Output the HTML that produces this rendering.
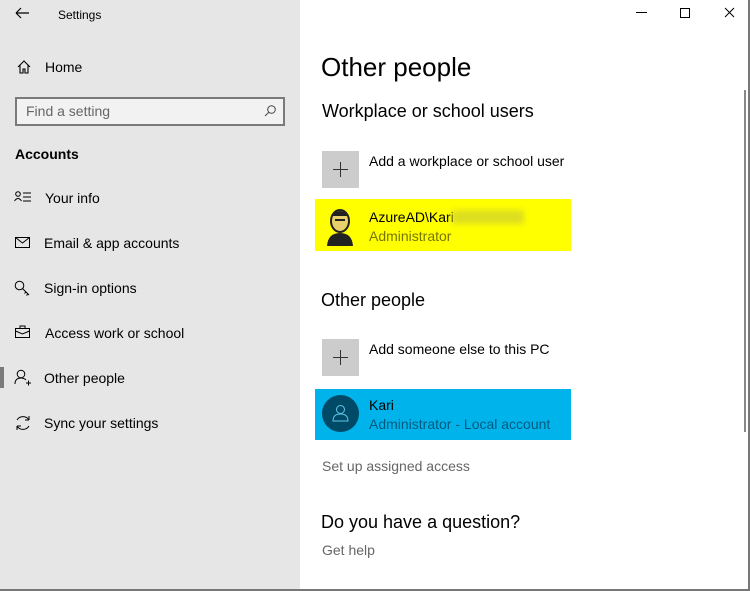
<!DOCTYPE html>
<html><head><meta charset="utf-8"><style>
*{margin:0;padding:0;box-sizing:border-box}
body{width:750px;height:591px;position:relative;overflow:hidden;background:#fff;font-family:"Liberation Sans",sans-serif;color:#000}
.a{position:absolute;white-space:nowrap}
#side{position:absolute;left:0;top:0;width:300px;height:591px;background:#e6e6e6}
.nav{font-size:14px}
.ic{position:absolute}
.g{color:#666}
</style></head><body>
<div id="side"></div>
<svg class="ic" style="left:14px;top:6px" width="16" height="14"><path d="M2 7H15M2 7L7 2M2 7L7 12" stroke="#000" stroke-width="1.2" fill="none"/></svg>
<div class="a" style="left:58px;top:8px;font-size:12px">Settings</div>
<svg class="ic" style="left:16px;top:59px" width="16" height="16"><path d="M2 8L8 2L14 8M4 6V14H7V10H9V14H12V6" stroke="#000" stroke-width="1.1" fill="none"/></svg>
<div class="a nav" style="left:45px;top:59px">Home</div>
<div class="a" style="left:15px;top:97px;width:270px;height:29px;border:2px solid #7a7a7a;background:#f2f2f2"></div>
<div class="a" style="left:26px;top:103px;font-size:14px;color:#666">Find a setting</div>
<svg class="ic" style="left:263px;top:104px" width="14" height="14"><circle cx="8.5" cy="5.5" r="3.8" stroke="#444" fill="none"/><path d="M6 8L2 12" stroke="#444"/></svg>
<div class="a" style="left:15px;top:146px;font-size:14px;font-weight:bold">Accounts</div>
<svg class="ic" style="left:14px;top:191px" width="18" height="12"><circle cx="4" cy="3" r="2.3" stroke="#000" fill="none"/><path d="M0.5 10Q4 5 7.5 10M9 2H17M9 6H17M9 10H17" stroke="#000" fill="none"/></svg>
<div class="a nav" style="left:45px;top:190px">Your info</div>
<svg class="ic" style="left:15px;top:237px" width="16" height="12"><rect x="0.5" y="0.5" width="14" height="10" stroke="#000" fill="none"/><path d="M0.5 0.5L7.5 6L14.5 0.5" stroke="#000" fill="none"/></svg>
<div class="a nav" style="left:44px;top:235px">Email &amp; app accounts</div>
<svg class="ic" style="left:14px;top:280px" width="18" height="18"><circle cx="5.5" cy="5.5" r="4.3" stroke="#000" fill="none"/><path d="M8.5 8.5L15 15M12 12L10.5 13.5M14 14L12.5 15.5" stroke="#000" fill="none"/></svg>
<div class="a nav" style="left:44px;top:280px">Sign-in options</div>
<svg class="ic" style="left:15px;top:325px" width="16" height="14"><rect x="0.5" y="3.5" width="14" height="9" stroke="#000" fill="none"/><path d="M5 3.5V1H10V3.5M0.5 6L7.5 9L14.5 6" stroke="#000" fill="none"/></svg>
<div class="a nav" style="left:45px;top:325px">Access work or school</div>
<div class="a" style="left:0;top:367px;width:4px;height:21px;background:#7a7a7a"></div>
<svg class="ic" style="left:14px;top:369px" width="18" height="18"><circle cx="7" cy="5" r="3.8" stroke="#000" fill="none"/><path d="M1 15Q1 9 7 9Q10 9 12 11M12 14H17M14.5 11.5V16.5" stroke="#000" fill="none"/></svg>
<div class="a nav" style="left:44px;top:370px">Other people</div>
<svg class="ic" style="left:14px;top:414px" width="18" height="18"><path d="M3 6A7 7 0 0 1 15 6M15 6V2M15 6H11M15 12A7 7 0 0 1 3 12M3 12V16M3 12H7" stroke="#000" fill="none"/></svg>
<div class="a nav" style="left:44px;top:415px">Sync your settings</div>

<svg class="ic" style="left:634px;top:6px" width="110" height="14"><path d="M2 6.5H13" stroke="#000"/><rect x="46.5" y="2.5" width="9" height="9" stroke="#000" fill="none"/><path d="M91 2L100 11M100 2L91 11" stroke="#000"/></svg>
<div class="a" style="left:321px;top:52px;font-size:26px">Other people</div>
<div class="a" style="left:322px;top:101px;font-size:18px">Workplace or school users</div>
<div class="a" style="left:322px;top:151px;width:37px;height:37px;background:#ccc"></div>
<svg class="ic" style="left:322px;top:151px" width="37" height="37"><path d="M18.5 11V26M11 18.5H26" stroke="#333"/></svg>
<div class="a" style="left:369px;top:153px;font-size:14px">Add a workplace or school user</div>
<div class="a" style="left:315px;top:199px;width:256px;height:52px;background:#ffff00"></div>
<svg class="ic" style="left:322px;top:206px" width="36" height="40"><ellipse cx="18" cy="15" rx="9" ry="11" fill="#e8d06a" stroke="#222" stroke-width="2"/><path d="M9 10Q18 0 27 10" fill="#222"/><path d="M5 40Q6 27 18 27Q30 27 31 40Z" fill="#222"/><rect x="13" y="13" width="10" height="2" fill="#222"/></svg>
<div class="a" style="left:369px;top:209px;font-size:14px">AzureAD\Kari</div>
<div class="a" style="left:452px;top:210px;width:72px;height:14px;background:#dede20;filter:blur(3px)"></div>
<div class="a" style="left:369px;top:228px;font-size:14px;color:#777700">Administrator</div>
<div class="a" style="left:321px;top:290px;font-size:18px">Other people</div>
<div class="a" style="left:322px;top:339px;width:37px;height:37px;background:#ccc"></div>
<svg class="ic" style="left:322px;top:339px" width="37" height="37"><path d="M18.5 11V26M11 18.5H26" stroke="#333"/></svg>
<div class="a" style="left:369px;top:341px;font-size:14px">Add someone else to this PC</div>
<div class="a" style="left:315px;top:389px;width:256px;height:51px;background:#00b4eb"></div>
<div class="a" style="left:322px;top:395px;width:37px;height:37px;border-radius:50%;background:#004a68"></div>
<svg class="ic" style="left:322px;top:395px" width="37" height="37"><circle cx="18.5" cy="14.5" r="4" stroke="#5fc6e8" fill="none"/><path d="M11 26Q11 19 18.5 19Q26 19 26 26Z" stroke="#5fc6e8" fill="none"/></svg>
<div class="a" style="left:369px;top:397px;font-size:14px">Kari</div>
<div class="a" style="left:369px;top:416px;font-size:14px;color:#005a80">Administrator - Local account</div>
<div class="a g" style="left:322px;top:458px;font-size:14px">Set up assigned access</div>
<div class="a" style="left:321px;top:512px;font-size:18px">Do you have a question?</div>
<div class="a g" style="left:322px;top:542px;font-size:14px">Get help</div>
<div class="a" style="left:744px;top:90px;width:2px;height:342px;background:#888"></div>
<div class="a" style="left:748px;top:0;width:2px;height:591px;background:#777"></div>
<div class="a" style="left:0;top:589px;width:750px;height:2px;background:#777"></div>
</body></html>
